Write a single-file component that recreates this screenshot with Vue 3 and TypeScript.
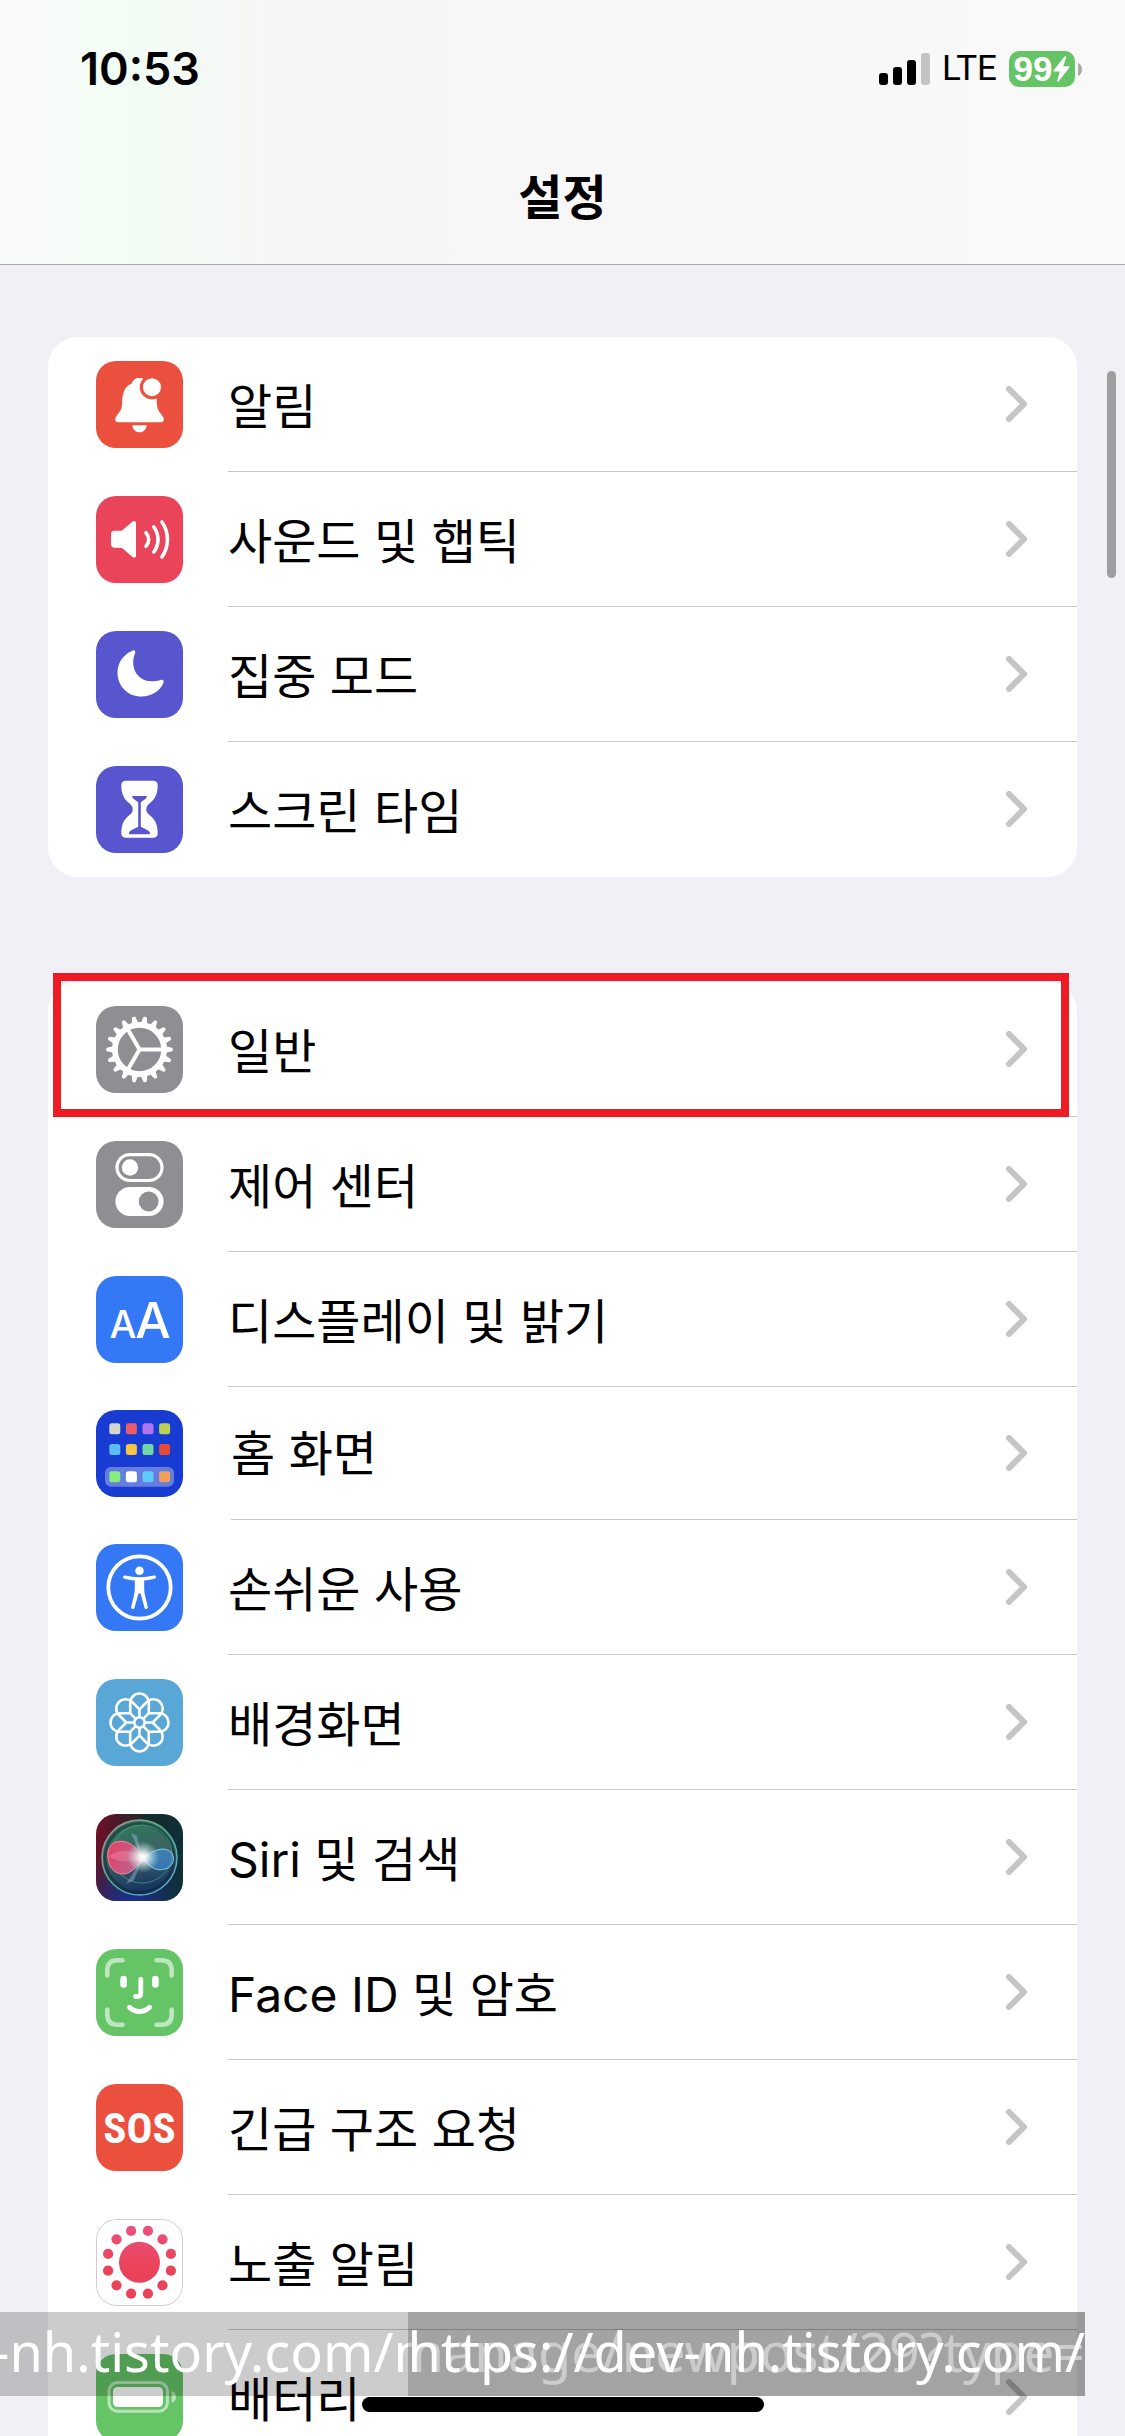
<script setup lang="ts">
type IconName =
  | 'bell' | 'sound' | 'moon' | 'hourglass' | 'gear' | 'toggles' | 'letters' | 'home'
  | 'access' | 'flower' | 'siri' | 'face' | 'sos' | 'exposure' | 'battery'

interface Item {
  icon: IconName
  label: string
  highlighted?: boolean
  compact?: boolean
}

const groups: Item[][] = [
  [
    { icon: 'bell', label: '알림' },
    { icon: 'sound', label: '사운드 및 햅틱' },
    { icon: 'moon', label: '집중 모드' },
    { icon: 'hourglass', label: '스크린 타임' },
  ],
  [
    { icon: 'gear', label: '일반', highlighted: true },
    { icon: 'toggles', label: '제어 센터' },
    { icon: 'letters', label: '디스플레이 및 밝기' },
    { icon: 'home', label: '홈 화면', compact: true },
    { icon: 'access', label: '손쉬운 사용' },
    { icon: 'flower', label: '배경화면' },
    { icon: 'siri', label: 'Siri 및 검색' },
    { icon: 'face', label: 'Face ID 및 암호' },
    { icon: 'sos', label: '긴급 구조 요청' },
    { icon: 'exposure', label: '노출 알림' },
    { icon: 'battery', label: '배터리' },
  ],
]

const steps = (count: number, start = 0): number[] =>
  Array.from({ length: count }, (_, i) => start + (i * 360) / count)

const teeth = steps(18)
const petals = steps(8)
const dots = steps(12, 15)

const tiles = [
  '#d4d6cf', '#ea5c68', '#ad74f4', '#b9d253',
  '#5cbdf6', '#f6c343', '#72d6a5', '#e54b38',
  '#86ee7e', '#ffffff', '#5fcbf8', '#f0a058',
].map((fill, i) => ({
  fill,
  x: 13.3 + (i % 4) * 16.6,
  y: [13.2, 34, 61.2][Math.floor(i / 4)],
}))
</script>

<template>
  <div class="phone">
    <header class="top">
      <div class="status">
        <time class="clock">10:53</time>
        <div class="signals">
          <svg class="bars" viewBox="0 0 51 32" aria-hidden="true">
            <rect x="0" y="20" width="9" height="12" rx="3" />
            <rect x="14" y="14" width="9" height="18" rx="3" />
            <rect x="28" y="7" width="9" height="25" rx="3" />
            <rect x="42" y="0" width="9" height="32" rx="3" fill="#c4c4c4" />
          </svg>
          <span class="network">LTE</span>
          <span class="charge">
            <span class="level">
              99
              <svg class="bolt" viewBox="0 0 17 26" aria-hidden="true">
                <path d="M11.6.6 0.6 14.2c-.5.7-.2 1.3.6 1.3h5.6L4.2 24.6c-.3 1.2.8 1.6 1.5.7L16.4 11.6c.5-.7.2-1.3-.6-1.3h-5.5L13.1 1.4C13.4.3 12.3-.2 11.6.6z" fill="#fff" />
              </svg>
            </span>
            <svg class="nub" viewBox="0 0 4 13" aria-hidden="true">
              <path d="M0 0c2.5 1 4 3.5 4 6.5S2.500 12 0 13z" fill="#a9a9a9" />
            </svg>
          </span>
        </div>
      </div>
      <h1 class="title">설정</h1>
    </header>

    <main class="content">
      <ul v-for="(group, g) in groups" :key="g" class="group">
        <li
          v-for="item in group"
          :key="item.icon"
          class="item"
          :class="{ highlighted: item.highlighted, compact: item.compact }"
        >
          <a class="link" href="#">
            <svg class="icon" :class="item.icon" viewBox="0 0 87 87" aria-hidden="true">
              <g v-if="item.icon === 'bell'" fill="#fff">
                <path d="M43.500 17c-4 0-7 2-7.700 5.500C29.500 25 26.500 31 26.300 39c-.2 7-1 10-3.500 13-2 2.500-3.600 4-3.600 6.500 0 1.700 1.200 2.700 3 2.700h42.600c1.800 0 3-1 3-2.700 0-2.500-1.600-4-3.600-6.500-2.500-3-3.300-6-3.500-13-.2-8-3-14-8.500-16.500C50.500 19 47.500 17 43.500 17z" />
                <path d="M36.400 64.200h14.200c0 4-3.200 7.100-7.100 7.100s-7.100-3.100-7.100-7.100z" />
                <circle cx="56" cy="26.200" r="12.200" fill="#eb4f3d" />
                <circle cx="56" cy="26.200" r="9" />
              </g>
              <g v-else-if="item.icon === 'sound'" fill="none" stroke="#fff" stroke-width="3.600" stroke-linecap="round">
                <path stroke="none" fill="#fff" d="M18.500 34.800h7.200L36.600 25.600c1.600-1.300 3.400-.7 3.400 1.300v32.800c0 2-1.800 2.600-3.400 1.300L25.700 51.800h-7.200c-2.200 0-3.500-1.300-3.500-3.500v-10c0-2.200 1.300-3.500 3.500-3.500z" />
                <path d="M50 36.700c3.600 4 3.600 9.600 0 13.600" />
                <path d="M57.800 31c5.600 7.500 5.600 17.500 0 25" />
                <path d="M65.900 26c7.400 10.500 7.400 24.500 0 35" />
              </g>
              <path v-else-if="item.icon === 'moon'" fill="#fff" d="M36.500 19.700c1.800-1 3.200.3 2.600 2.200-1.500 4-1.900 7-1.900 9.600 0 11 7.800 18.800 18.500 18.800 3 0 5.600-.3 8.800-1.400 2-.7 3.800.5 3 2.800C64 60 55.500 65.500 45.500 65.500 31.500 65.500 21.500 55 21.500 41.500c0-10 6-18 15-21.800z" />
              <g v-else-if="item.icon === 'hourglass'">
                <path fill="#fff" d="M30 14.800h27c3 0 4.700 1.700 4.700 4.500C61.700 28 59 33 54 37c-5 4-5 8.600 0 12.600 5 4 7.700 8.900 7.700 17.700 0 2.800-1.700 4.500-4.700 4.500H30c-3 0-4.700-1.700-4.700-4.500 0-8.800 2.700-13.700 7.700-17.700 5-4 5-8.600 0-12.600-5-4-7.700-9-7.700-17.700 0-2.800 1.700-4.500 4.700-4.500z" />
                <path fill="#5856ce" d="M36 30h15c-.6 3-3.500 4-6.200 6.200v24.500C48.300 62.700 54 64.200 54 67.400c0 .5-.3.800-.8.800H33.800c-.5 0-.8-.3-.8-.8 0-3.200 5.700-4.700 9.200-6.700V36.200C39.500 34 36.600 33 36 30z" />
              </g>
              <g v-else-if="item.icon === 'gear'" transform="translate(43.500 43.500)" fill="none" stroke="#fff">
                <circle r="24.600" stroke-width="5.800" />
                <path d="M0 0H24M0 0-12 -20.800M0 0-12 20.800" stroke-width="4" />
                <path v-for="a in teeth" :key="a" :transform="`rotate(${a})`" stroke="none" fill="#fff" d="M26-3.300 32.600-1.700q.7.200.7 1.700t-.7 1.700L26 3.300z" />
              </g>
              <g v-else-if="item.icon === 'toggles'">
                <rect x="21" y="13.700" width="45" height="25.800" rx="12.900" fill="none" stroke="#fff" stroke-width="3.200" />
                <circle cx="34" cy="26.500" r="8.200" fill="#fff" />
                <rect x="19.400" y="46" width="48.200" height="29" rx="14.500" fill="#fff" />
                <circle cx="52.700" cy="60.500" r="9.900" fill="#8e8e93" />
              </g>
              <g v-else-if="item.icon === 'letters'" class="glyphs" fill="#fff" text-anchor="middle">
                <text x="27" y="62" font-size="38">A</text>
                <text x="57" y="62" font-size="50">A</text>
              </g>
              <g v-else-if="item.icon === 'home'">
                <rect x="9" y="57" width="69" height="19.700" rx="6" fill="#fff" fill-opacity=".34" />
                <rect v-for="t in tiles" :key="t.fill" :x="t.x" :y="t.y" width="11" height="11" rx="2.500" :fill="t.fill" />
              </g>
              <g v-else-if="item.icon === 'access'" fill="#fff">
                <circle cx="43.500" cy="43.500" r="31.200" fill="none" stroke="#fff" stroke-width="3.800" />
                <circle cx="43.500" cy="26.700" r="4.300" />
                <path d="M28.700 33.200Q43.500 36.800 58.300 33.200" fill="none" stroke="#fff" stroke-width="3.400" stroke-linecap="round" />
                <path d="M38.800 35.500h9.400V45c0 3 .8 6 1.600 9.500l2 8.500a1.700 1.700 0 0 1-3.300.8L44.500 49.500h-2L38.500 63.800a1.700 1.700 0 0 1-3.300-.8l2-8.500C38 51 38.800 48 38.800 45z" />
              </g>
              <g v-else-if="item.icon === 'flower'" transform="translate(43.500 43.500)" fill="none" stroke="#fff" stroke-width="2.600">
                <g v-for="a in petals" :key="a" :transform="`rotate(${a})`">
                  <path d="M-9.300-9.300V-19.700a9.300 9.300 0 0 1 18.600 0V-9.300" />
                  <path d="M0-13V-5.500" />
                </g>
                <circle r="5.200" />
              </g>
              <g v-else-if="item.icon === 'siri'">
                <defs>
                  <linearGradient id="siri-base" x1="0" y1="0.300" x2="1" y2="0.500">
                    <stop offset="0" stop-color="#6d1028" />
                    <stop offset=".5" stop-color="#152a2c" />
                    <stop offset="1" stop-color="#0e3038" />
                  </linearGradient>
                  <radialGradient id="siri-deep" cx=".4" cy="1" r=".6">
                    <stop offset="0" stop-color="#1f2f92" />
                    <stop offset="1" stop-color="#1f2f92" stop-opacity="0" />
                  </radialGradient>
                  <linearGradient id="siri-orb" x1=".4" y1="0" x2=".6" y2="1">
                    <stop offset="0" stop-color="#2f7a5c" />
                    <stop offset=".5" stop-color="#3c5f64" />
                    <stop offset="1" stop-color="#0f2e63" />
                  </linearGradient>
                  <linearGradient id="siri-rim" x1="0" y1="0" x2="1" y2="1">
                    <stop offset="0" stop-color="#c98a92" />
                    <stop offset=".5" stop-color="#4fb487" />
                    <stop offset="1" stop-color="#5aa9ea" />
                  </linearGradient>
                  <linearGradient id="siri-pink" x1="0" y1="0" x2="1" y2=".4">
                    <stop offset="0" stop-color="#e83f62" />
                    <stop offset="1" stop-color="#b5668f" />
                  </linearGradient>
                  <radialGradient id="siri-glow">
                    <stop offset="0" stop-color="#fff" />
                    <stop offset=".25" stop-color="#fff" stop-opacity=".85" />
                    <stop offset="1" stop-color="#bfeee8" stop-opacity="0" />
                  </radialGradient>
                </defs>
                <rect width="87" height="87" fill="url(#siri-base)" />
                <rect width="87" height="87" fill="url(#siri-deep)" />
                <circle cx="43.500" cy="43.500" r="37.500" fill="url(#siri-orb)" stroke="url(#siri-rim)" stroke-width="1.500" />
                <circle cx="43.500" cy="44" r="34.500" fill="none" stroke="#123" stroke-opacity=".5" stroke-width="3" />
                <ellipse cx="46" cy="40" rx="30" ry="29" fill="none" stroke="#58c79a" stroke-opacity=".5" />
                <path d="M48 44C39 31 31 26 22 27.500c-8 1.500-11 8.500-10 16.500 1 10 7 16 15 16 9 0 15-9 21-16z" fill="url(#siri-pink)" stroke="#f58aa6" stroke-width="1" />
                <path d="M47 42c-10-6-24-8-34 0 10 8 24 6 34 2" fill="#f9a7c0" fill-opacity=".3" />
                <path d="M47 44c8 12 16 13 22 11 8-2 11-11 6-17-7-6-18-2-28 6z" fill="#3f8fd8" fill-opacity=".65" stroke="#7fd6f0" stroke-width="1" />
                <path d="M47 44 30 70 38 66zM47 44l21 24-7-8zM46 44l-5-22-6-3z" fill="#a8c8e8" fill-opacity=".4" />
                <circle cx="47" cy="43" r="16" fill="url(#siri-glow)" />
              </g>
              <g v-else-if="item.icon === 'face'" fill="none" stroke="#fff" stroke-linecap="round">
                <path stroke-opacity=".58" stroke-width="4.600" d="M11.300 26.500V21.500q0-10.200 10.200-10.200h5M60.500 11.300h5q10.200 0 10.200 10.200v5M75.700 60.500v5q0 10.200-10.200 10.200h-5M26.500 75.700h-5q-10.200 0-10.200-10.200v-5" />
                <path stroke-width="6.600" d="M27.600 30v5.400M59.400 30v5.400" />
                <path stroke-width="4.800" d="M44.800 30.400v13.800q0 3.300-3.300 3.300h-1.900" />
                <path stroke-width="5" d="M33.500 58.300c5.500 5.600 14.500 5.600 20 0" />
              </g>
              <text v-else-if="item.icon === 'sos'" class="sos-text" x="43.500" y="59" text-anchor="middle" fill="#fff">SOS</text>
              <g v-else-if="item.icon === 'exposure'" fill="url(#exposure-fill)">
                <defs>
                  <linearGradient id="exposure-fill" gradientUnits="userSpaceOnUse" x1="0" y1="7" x2="0" y2="50">
                    <stop offset="0" stop-color="#ea527f" />
                    <stop offset="1" stop-color="#ea4359" />
                  </linearGradient>
                </defs>
                <rect x=".5" y=".5" width="86" height="86" rx="20" fill="none" stroke="#cdcdcf" />
                <circle cx="43.500" cy="43.300" r="20.500" />
                <circle
                  v-for="a in dots"
                  :key="a"
                  :cx="43.5 + 32.500 * Math.sin((a * Math.PI) / 180)"
                  :cy="43.3 - 32.500 * Math.cos((a * Math.PI) / 180)"
                  r="5.100"
                />
              </g>
              <g v-else>
                <rect x="13" y="28.600" width="58.400" height="28.700" rx="8.500" fill="none" stroke="#fff" stroke-opacity=".55" stroke-width="3" />
                <rect x="17" y="33" width="50" height="20" rx="4.500" fill="#fff" />
                <path d="M75.700 37c2.700 1 4.300 3.200 4.300 6s-1.600 5-4.300 6z" fill="#fff" fill-opacity=".55" />
              </g>
            </svg>
            <span class="row">
              <span class="label">{{ item.label }}</span>
              <svg class="chevron" viewBox="0 0 21 36" aria-hidden="true">
                <path d="M3 3 18 18 3 33" fill="none" stroke="#c5c5c7" stroke-width="6" stroke-linecap="round" stroke-linejoin="round" />
              </svg>
            </span>
          </a>
        </li>
      </ul>
    </main>

    <div class="scrollbar"></div>
    <div class="banner wide"><span>-nh.tistory.com/manage/newpost/29?type=</span></div>
    <div class="banner"><span>https://dev-nh.tistory.com/</span></div>
    <div class="home-bar"></div>
  </div>
</template>

<style>
body {
  margin: 0;
  background: #f1f0f6;
}
</style>

<style scoped>
.phone {
  position: relative;
  display: flex;
  flex-direction: column;
  height: 100vh;
  overflow: hidden;
  background: #f1f0f6;
  color: #000;
  font-family: Inter, "Noto Sans CJK KR", sans-serif;
}

.top {
  flex: none;
  border-bottom: 1px solid #a9a9ad;
  background: linear-gradient(90deg, #f9fbfb 0, #f8fbf9 40px, #f2fdf4 110px, #f3fbf4 170px, #f6f6f6 270px, #f7f7f7 60%, #f9f9f9 100%);
}

.status {
  display: flex;
  align-items: center;
  justify-content: space-between;
  height: 132px;
  padding: 6px 43px 0 80px;
  box-sizing: border-box;
}

.clock {
  font-size: 45px;
  font-weight: 600;
  line-height: 48px;
}

.signals {
  display: flex;
  align-items: center;
  gap: 12px;
}

.bars {
  width: 51px;
  height: 32px;
}

.network {
  font-size: 35px;
  font-weight: 400;
  line-height: 40px;
  font-family: Roboto, sans-serif;
}

.charge {
  display: flex;
  align-items: center;
  gap: 3px;
}

.level {
  display: flex;
  align-items: center;
  justify-content: center;
  gap: 1px;
  width: 66px;
  height: 36px;
  border-radius: 10px;
  background: #65c466;
  color: #fff;
  font: 700 35px/36px "Liberation Sans", sans-serif;
}

.bolt {
  width: 17px;
  height: 26px;
}

.nub {
  width: 4px;
  height: 13px;
}

.title {
  margin: 0;
  font-size: 48px;
  font-weight: 700;
  line-height: 132px;
  text-align: center;
}

.content {
  display: flex;
  flex-direction: column;
  gap: 105px;
  padding: 72px 48px 0;
}

.group {
  margin: 0;
  padding: 0;
  list-style: none;
  border-radius: 30px;
  background: #fff;
}

.item {
  position: relative;
}

.link {
  display: flex;
  align-items: center;
  gap: 45px;
  height: 135px;
  padding-left: 48px;
  color: inherit;
  text-decoration: none;
}

.compact .link {
  gap: 48px;
  height: 133px;
}

.highlighted::after {
  content: "";
  position: absolute;
  inset: -9px 8px 0 5px;
  border: 8px solid #ed1c24;
}

.row {
  flex: 1;
  display: flex;
  align-items: center;
  justify-content: space-between;
  height: 100%;
  padding-right: 50px;
  border-bottom: 1px solid #c8c8ca;
  box-sizing: border-box;
}

.item:last-child .row {
  border-bottom-color: transparent;
}

.label {
  padding-top: 6px;
  font-size: 48px;
  line-height: 60px;
}

.compact .label {
  padding-top: 2px;
}

.chevron {
  width: 21px;
  height: 36px;
}

.icon {
  flex: none;
  width: 87px;
  height: 87px;
  border-radius: 20px;
}

.bell, .sos { background: #eb4f3d; }
.sound { background: #ea445a; }
.moon, .hourglass { background: #5856ce; }
.gear, .toggles { background: #8e8e93; }
.letters, .access { background: #3478f6; }
.home { background: #183bd1; }
.flower { background: #59a7d7; }
.face, .battery { background: #65c466; }
.exposure { background: #fff; }

.glyphs {
  font-family: Inter, sans-serif;
  font-weight: 500;
}

.sos-text {
  font: 700 43px "Liberation Sans Narrow", "Roboto Condensed", "Liberation Sans", sans-serif;
}

.scrollbar {
  position: absolute;
  top: 371px;
  right: 9px;
  width: 9px;
  height: 207px;
  border-radius: 5px;
  background: #9e9e9f;
}

.banner {
  position: absolute;
  right: 40px;
  bottom: 40px;
  display: flex;
  justify-content: flex-end;
  height: 84px;
  overflow: hidden;
  background: rgba(0, 0, 0, 0.2);
  color: #fff;
  font: 400 54px/78px "Noto Sans", sans-serif;
  white-space: nowrap;
}

.banner.wide {
  left: 0;
}

.home-bar {
  position: absolute;
  bottom: 24px;
  left: 50%;
  width: 402px;
  height: 15px;
  border-radius: 8px;
  background: #000;
  transform: translateX(-50%);
}
</style>
